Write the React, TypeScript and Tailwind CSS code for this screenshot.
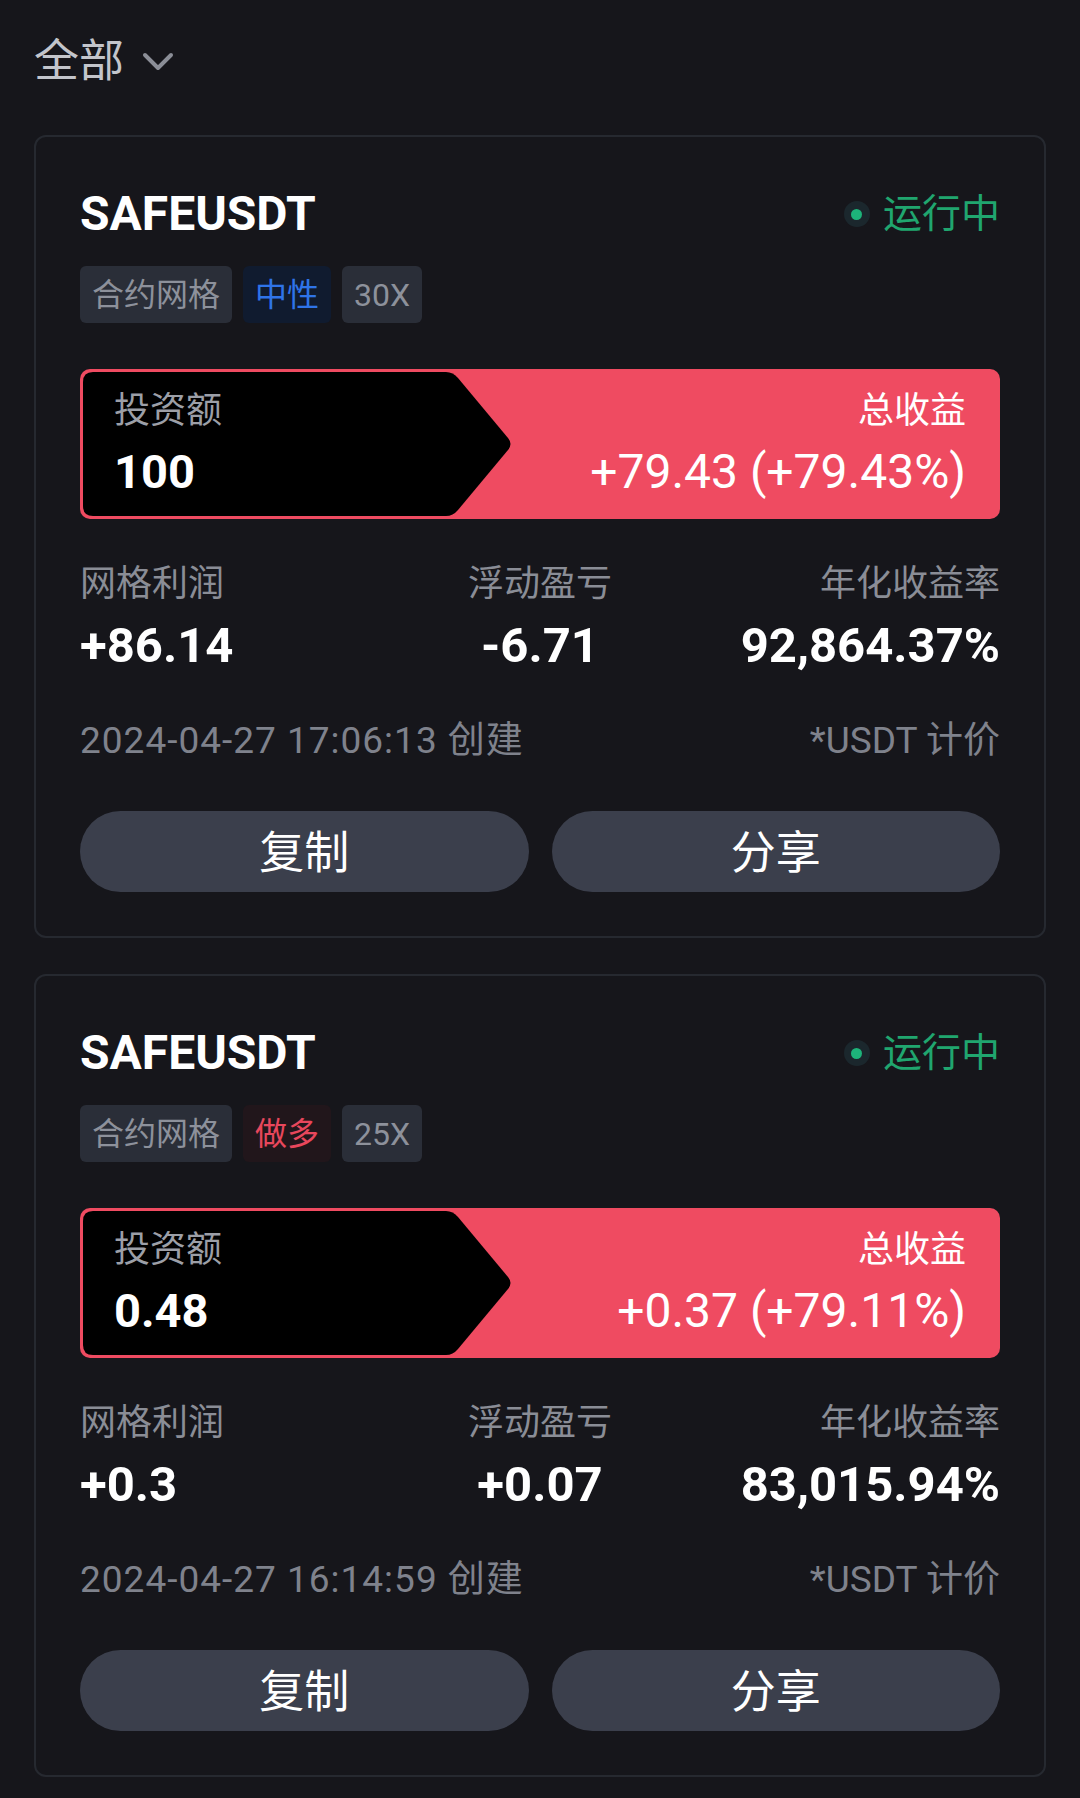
import React from 'react';

type Tag = { label: string; tone: 'gray' | 'blue' | 'red' };

interface GridBot {
  symbol: string;
  tags: Tag[];
  invest: string;
  total: string;
  gridProfit: string;
  floating: string;
  apr: string;
  created: string;
}

const bots: GridBot[] = [
  {
    symbol: 'SAFEUSDT',
    tags: [
      { label: '合约网格', tone: 'gray' },
      { label: '中性', tone: 'blue' },
      { label: '30X', tone: 'gray' },
    ],
    invest: '100',
    total: '+79.43 (+79.43%)',
    gridProfit: '+86.14',
    floating: '-6.71',
    apr: '92,864.37%',
    created: '2024-04-27 17:06:13 创建',
  },
  {
    symbol: 'SAFEUSDT',
    tags: [
      { label: '合约网格', tone: 'gray' },
      { label: '做多', tone: 'red' },
      { label: '25X', tone: 'gray' },
    ],
    invest: '0.48',
    total: '+0.37 (+79.11%)',
    gridProfit: '+0.3',
    floating: '+0.07',
    apr: '83,015.94%',
    created: '2024-04-27 16:14:59 创建',
  },
];

const toneClass: Record<Tag['tone'], string> = {
  gray: 'bg-[#2a2e38] text-[#8d919b]',
  blue: 'bg-[#101b2f] text-[#2f74e8]',
  red: 'bg-[#21161b] text-[#e8475c]',
};

function ProfitBanner({ invest, total }: { invest: string; total: string }) {
  return (
    <div className="relative mt-[46px] h-[150px] rounded-[10px] bg-[#ef4b61] overflow-hidden">
      <svg
        className="absolute inset-0"
        width="920"
        height="150"
        viewBox="0 0 920 150"
      >
        <path
          d="M 13 3 H 366 Q 373 3 378 9 L 428 69 Q 433 75 428 81 L 378 141 Q 373 147 366 147 H 13 Q 3 147 3 137 V 13 Q 3 3 13 3 Z"
          fill="#000"
        />
      </svg>
      <div className="relative flex h-full justify-between px-[34px] pt-[20px]">
        <div className="flex flex-col">
          <span className="h-[44px] leading-[44px] text-[36px] text-[#9c9fa7]">投资额</span>
          <span className="mt-[14px] h-[50px] leading-[50px] text-[47px] font-bold text-white">
            {invest}
          </span>
        </div>
        <div className="flex flex-col items-end">
          <span className="h-[44px] leading-[44px] text-[36px] text-white">总收益</span>
          <span className="mt-[14px] h-[50px] leading-[50px] text-[48px] text-white">{total}</span>
        </div>
      </div>
    </div>
  );
}

function BotCard({ bot }: { bot: GridBot }) {
  return (
    <div className="rounded-[12px] border-2 border-[#262930] px-[44px] pt-[53px] pb-[44px]">
      <div className="flex h-[48px] items-center justify-between">
        <span className="text-[48px] font-bold leading-[48px] text-white">{bot.symbol}</span>
        <div className="flex items-center gap-[13px]">
          <span className="flex h-[26px] w-[26px] items-center justify-center rounded-full bg-[#1b272d]">
            <span className="h-[11px] w-[11px] rounded-full bg-[#1db47a]" />
          </span>
          <span className="text-[39px] leading-[48px] text-[#20a66f]">运行中</span>
        </div>
      </div>

      <div className="mt-[28px] flex gap-[11px]">
        {bot.tags.map((tag, idx) => (
          <span
            key={idx}
            className={`flex h-[57px] items-center rounded-[6px] px-[12px] text-[32px] ${toneClass[tag.tone]}`}
          >
            {tag.label}
          </span>
        ))}
      </div>

      <ProfitBanner invest={bot.invest} total={bot.total} />

      <div className="mt-[45px] grid grid-cols-3 text-[36px] text-[#8a8d96]">
        <span className="h-[40px] leading-[40px]">网格利润</span>
        <span className="h-[40px] leading-[40px] text-center">浮动盈亏</span>
        <span className="h-[40px] leading-[40px] text-right">年化收益率</span>
      </div>
      <div className="mt-[17px] grid grid-cols-3 text-[49px] font-bold text-white">
        <span className="h-[50px] leading-[50px]">{bot.gridProfit}</span>
        <span className="h-[50px] leading-[50px] text-center">{bot.floating}</span>
        <span className="h-[50px] leading-[50px] text-right">{bot.apr}</span>
      </div>

      <div className="mt-[50px] flex h-[40px] items-center justify-between text-[37px] text-[#7f828c]">
        <span className="tracking-[1px]">{bot.created}</span>
        <span>*USDT 计价</span>
      </div>

      <div className="mt-[50px] flex gap-[23px]">
        <button className="h-[81px] flex-1 rounded-full bg-[#3b3f4c] pt-[4px] text-[45px] text-white">
          复制
        </button>
        <button className="h-[81px] flex-1 rounded-full bg-[#3b3f4c] pt-[4px] text-[45px] text-white">
          分享
        </button>
      </div>
    </div>
  );
}

export default function App() {
  return (
    <div
      className="min-h-[1798px] w-[1080px] bg-[#16161b] px-[34px] pt-[40px]"
      style={{ fontFamily: 'Roboto, "Noto Sans CJK SC", sans-serif' }}
    >
      <div className="flex h-[44px] items-center gap-[18px]">
        <span className="text-[45px] leading-[44px] text-[#c3c5cb]">全部</span>
        <svg width="32" height="20" viewBox="0 0 32 20" fill="none">
          <path
            d="M3 3 L16 16 L29 3"
            stroke="#8b8e97"
            strokeWidth="4"
            strokeLinecap="round"
            strokeLinejoin="round"
          />
        </svg>
      </div>

      <div className="mt-[51px] flex flex-col gap-[36px]">
        {bots.map((bot, idx) => (
          <BotCard key={idx} bot={bot} />
        ))}
      </div>
    </div>
  );
}
